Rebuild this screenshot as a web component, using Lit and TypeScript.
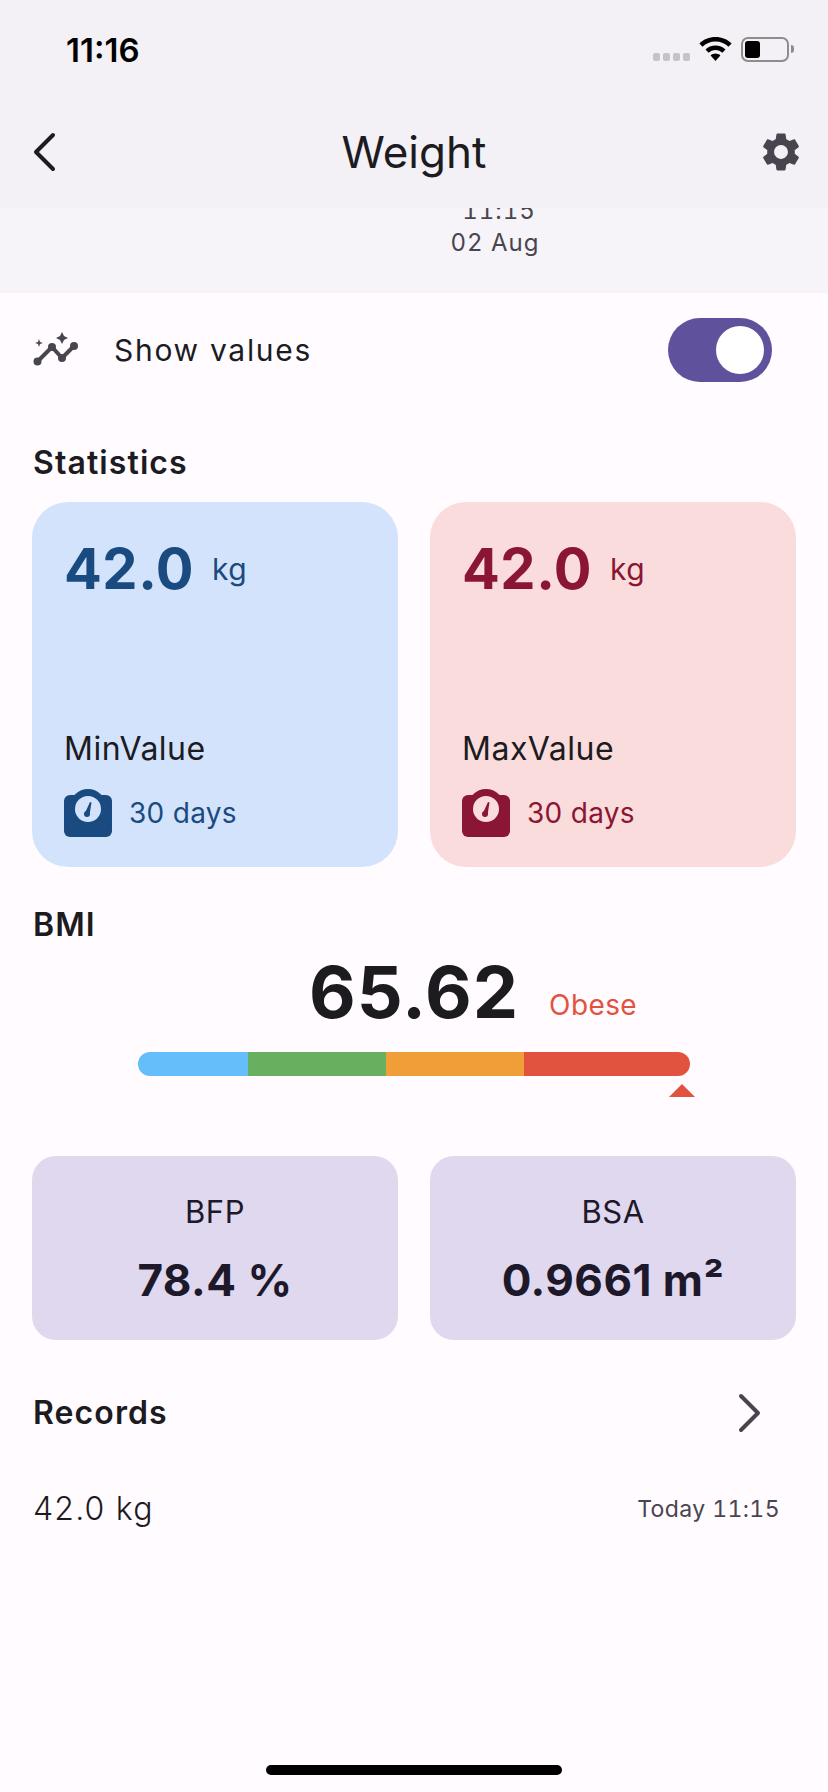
import { LitElement, css, html, svg } from 'lit'
import { customElement } from 'lit/decorators.js'

const scaleIcon = (bg: string) => html`
  <svg class="scale" viewBox="0 0 48 48">
    <circle cx="24" cy="18" r="18" fill="currentColor"></circle>
    <rect x="0" y="6" width="48" height="42" rx="6" fill="currentColor"></rect>
    <circle cx="24" cy="20" r="13" fill=${bg}></circle>
    <path d="M20.500 25 L26 13 L27.500 13.600 L25.500 26 Z" fill="currentColor"></path>
    <circle cx="23" cy="25" r="3" fill="currentColor"></circle>
  </svg>
`

const stats = [
  { cls: 'min', value: '42.0', label: 'MinValue', bg: '#d4e3fc' },
  { cls: 'max', value: '42.0', label: 'MaxValue', bg: '#fadcdc' },
]

@customElement('app-root')
export class AppRoot extends LitElement {
  render() {
    return html`
      <div class="page">
        <div class="status">
          <span class="time">11:16</span>
          <div class="status-icons">
            <div class="signal"><i></i><i></i><i></i><i></i></div>
            <svg class="wifi" viewBox="0 0 33 24">
              ${svg`<path d="M16.5 0C10.2 0 4.6 2.4.4 6.4l3.1 3.3C6.9 6.5 11.4 4.5 16.5 4.5s9.6 2 13 5.2l3.1-3.3C28.4 2.4 22.8 0 16.5 0z"></path>
              <path d="M16.5 8.4c-3.9 0-7.4 1.5-10 4l3.1 3.3c1.8-1.7 4.200-2.800 6.900-2.800s5.100 1.100 6.900 2.800l3.100-3.300c-2.600-2.500-6.100-4-10-4z"></path>
              <path d="M16.500 16.600c-1.900 0-3.600.700-4.900 1.900l4.900 5.500 4.900-5.500c-1.300-1.200-3-1.900-4.900-1.900z"></path>`}
            </svg>
            <div class="battery"><div class="battery-fill"></div></div>
            <div class="battery-nub"></div>
          </div>
        </div>

        <header class="bar">
          <svg class="back" viewBox="0 0 24 40">
            <path d="M21 3 L4 20 L21 37" fill="none" stroke="#1c1b1f" stroke-width="4" stroke-linecap="round" stroke-linejoin="round"></path>
          </svg>
          <h1>Weight</h1>
          <svg class="gear" viewBox="0 0 24 24">
            <path fill="#49454f" d="M19.140 12.940c.04-.3.06-.61.06-.94 0-.32-.02-.64-.07-.94l2.030-1.580c.18-.14.23-.41.12-.61l-1.920-3.320c-.12-.22-.37-.29-.59-.22l-2.390.96c-.5-.38-1.030-.7-1.620-.94l-.36-2.540c-.04-.24-.24-.41-.48-.41h-3.840c-.24 0-.43.17-.47.41l-.36 2.540c-.59.24-1.130.57-1.620.94l-2.390-.96c-.22-.08-.47 0-.59.22L2.740 8.870c-.12.21-.08.47.12.61l2.030 1.580c-.05.3-.09.63-.09.94s.02.64.07.94l-2.030 1.580c-.18.14-.23.41-.12.61l1.920 3.320c.12.22.37.29.59.22l2.390-.96c.5.38 1.030.7 1.620.94l.36 2.540c.05.24.24.41.48.41h3.840c.24 0 .44-.17.47-.41l.36-2.540c.59-.24 1.130-.56 1.620-.94l2.390.96c.22.08.47 0 .59-.22l1.920-3.320c.12-.22.07-.47-.12-.61l-2.010-1.580zM12 15.600c-1.980 0-3.600-1.620-3.600-3.600s1.620-3.600 3.600-3.600 3.600 1.620 3.600 3.600-1.620 3.600-3.600 3.600z"></path>
          </svg>
        </header>

        <div class="chart-strip">
          <div class="stamp"><span>11:15</span><span>02 Aug</span></div>
        </div>

        <div class="toggle-row">
          <svg class="spark" viewBox="0 0 48 36">
            <path d="M4 30 L19 15 L29 26 L41 14" fill="none" stroke="#49454f" stroke-width="4" stroke-linejoin="round"></path>
            <circle cx="4.500" cy="29.500" r="4" fill="#49454f"></circle>
            <circle cx="19" cy="15" r="4" fill="#49454f"></circle>
            <circle cx="29" cy="26" r="4" fill="#49454f"></circle>
            <circle cx="41" cy="14" r="4" fill="#49454f"></circle>
            <path d="M29 0 L31 4 L35 6 L31 8 L29 12 L27 8 L23 6 L27 4 Z" fill="#49454f"></path>
            <path d="M6 7 L7 10 L10 11 L7 12 L6 15 L5 12 L2 11 L5 10 Z" fill="#49454f"></path>
          </svg>
          <span class="toggle-label">Show values</span>
          <div class="switch"><div class="knob"></div></div>
        </div>

        <h2 class="stat-title">Statistics</h2>
        <div class="two-up">
          ${stats.map(
            (s) => html`
              <div class="stat ${s.cls}">
                <div class="stat-value"><b>${s.value}</b><span>kg</span></div>
                <div class="stat-label">${s.label}</div>
                <div class="stat-foot">${scaleIcon(s.bg)}<span>30 days</span></div>
              </div>
            `
          )}
        </div>

        <h2 class="bmi-title">BMI</h2>
        <div class="bmi-row">
          <span class="bmi-value">65.62</span>
          <span class="bmi-tag">Obese</span>
        </div>
        <div class="gauge">
          <i class="g1"></i><i class="g2"></i><i class="g3"></i><i class="g4"></i>
          <div class="marker"></div>
        </div>

        <div class="two-up small">
          <div class="metric"><span>BFP</span><b>78.4 %</b></div>
          <div class="metric"><span>BSA</span><b>0.9661 m²</b></div>
        </div>

        <div class="records-head">
          <h2>Records</h2>
          <svg class="chev" viewBox="0 0 24 40">
            <path d="M3 3 L20 20 L3 37" fill="none" stroke="#49454f" stroke-width="4" stroke-linecap="round" stroke-linejoin="round"></path>
          </svg>
        </div>
        <div class="record">
          <span class="record-val">42.0 kg</span>
          <span class="record-time">Today 11:15</span>
        </div>

        <div class="grow"></div>
        <div class="home"></div>
      </div>
    `
  }

  static styles = css`
    :host {
      display: block;
      font-family: Inter, 'Noto Sans', sans-serif;
      color: #1c1b1f;
    }
    .page {
      height: 1792px;
      background: #fffbff;
      display: flex;
      flex-direction: column;
      overflow: hidden;
    }
    .status {
      height: 88px;
      background: #f3f0f6;
      display: flex;
      justify-content: space-between;
      align-items: flex-start;
      padding: 0 34px 0 66px;
      flex: none;
    }
    .time {
      font-size: 33px;
      font-weight: 600;
      line-height: 32px;
      margin-top: 34px;
      color: #000;
    }
    .status-icons {
      display: flex;
      align-items: flex-start;
      margin-top: 37px;
    }
    .signal {
      display: flex;
      gap: 3px;
      margin-top: 16px;
      margin-right: 9px;
    }
    .signal i {
      width: 7px;
      height: 8px;
      border-radius: 2px;
      background: #c5c3c8;
    }
    .wifi {
      width: 33px;
      height: 24px;
      margin-right: 9px;
      fill: #000;
    }
    .battery {
      width: 48px;
      height: 25px;
      box-sizing: border-box;
      border: 2px solid #8e8c91;
      border-radius: 7px;
      padding: 2px;
    }
    .battery-fill {
      width: 15px;
      height: 100%;
      background: #000;
      border-radius: 3px;
    }
    .battery-nub {
      width: 3px;
      height: 8px;
      margin: 8px 0 0 2px;
      background: #8e8c91;
      border-radius: 0 3px 3px 0;
    }
    .bar {
      height: 120px;
      background: #f3f0f6;
      display: grid;
      grid-template-columns: 1fr auto 1fr;
      align-items: center;
      padding: 8px 24px 0;
      box-sizing: border-box;
      flex: none;
    }
    .bar h1 {
      margin: 0;
      font-size: 44px;
      font-weight: 400;
      line-height: 56px;
    }
    .back,
    .chev {
      width: 24px;
      height: 40px;
    }
    .back {
      margin-left: 8px;
    }
    .gear {
      width: 46px;
      height: 46px;
      justify-self: end;
    }
    .chart-strip {
      height: 85px;
      background: #f6f4f9;
      overflow: hidden;
      display: flex;
      justify-content: center;
      align-items: flex-end;
      padding-left: 2px;
      flex: none;
    }
    .stamp {
      display: flex;
      flex-direction: column;
      align-items: center;
      transform: translateX(80px);
      font-size: 24px;
      line-height: 32px;
      letter-spacing: 1px;
      color: #49454f;
      padding-bottom: 34px;
      font-variant-numeric: tabular-nums;
    }
    .stamp span:first-child {
      margin-left: 8px;
    }
    .toggle-row {
      display: flex;
      align-items: center;
      height: 64px;
      margin-top: 25px;
      padding: 0 56px 0 33px;
      flex: none;
    }
    .spark {
      width: 48px;
      height: 36px;
    }
    .toggle-label {
      margin-left: 33px;
      font-size: 30px;
      letter-spacing: 1.7px;
      flex: 1;
    }
    .switch {
      width: 104px;
      height: 64px;
      border-radius: 32px;
      background: #60519d;
      display: flex;
      align-items: center;
      justify-content: flex-end;
      padding-right: 8px;
      box-sizing: border-box;
    }
    .knob {
      width: 48px;
      height: 48px;
      border-radius: 50%;
      background: #fff;
    }
    h2 {
      margin: 0;
      font-size: 32px;
      font-weight: 600;
      line-height: 40px;
      letter-spacing: 1.1px;
    }
    .stat-title {
      margin: 61px 0 19px 33px;
    }
    .two-up {
      display: grid;
      grid-template-columns: 366px 366px;
      gap: 32px;
      padding: 0 32px;
      flex: none;
    }
    .stat {
      height: 365px;
      border-radius: 36px;
      padding: 30px 32px;
      box-sizing: border-box;
      display: flex;
      flex-direction: column;
    }
    .stat.min {
      background: #d4e3fc;
      color: #1a4b80;
    }
    .stat.max {
      background: #fadcdc;
      color: #8a1633;
    }
    .stat-value {
      display: flex;
      align-items: center;
      gap: 18px;
      height: 74px;
      line-height: 74px;
    }
    .stat-value b {
      font-size: 56px;
      font-weight: 700;
      letter-spacing: 0.5px;
    }
    .stat-value span {
      font-size: 30px;
      letter-spacing: 0.5px;
    }
    .stat-label {
      margin-top: auto;
      color: #1c1b1f;
      font-size: 32px;
      line-height: 40px;
      letter-spacing: 0.5px;
    }
    .stat-foot {
      display: flex;
      align-items: center;
      gap: 17px;
      margin-top: 20px;
      font-size: 28px;
      letter-spacing: 0.3px;
    }
    .scale {
      width: 48px;
      height: 48px;
      display: block;
    }
    .bmi-title {
      margin: 38px 0 0 33px;
    }
    .bmi-row {
      display: grid;
      grid-template-columns: 1fr auto 1fr;
      align-items: center;
      column-gap: 30px;
      height: 84px;
      line-height: 84px;
      margin-top: 5px;
      flex: none;
    }
    .bmi-value {
      grid-column: 2;
      font-size: 72px;
      font-weight: 700;
      letter-spacing: 1px;
    }
    .bmi-tag {
      font-size: 28px;
      line-height: 34px;
      margin-top: 25px;
      color: #e2533f;
      letter-spacing: 0.4px;
    }
    .gauge {
      position: relative;
      display: grid;
      grid-template-columns: 110px 138px 138px 166px;
      width: 552px;
      height: 24px;
      margin: 18px 0 0 138px;
      flex: none;
    }
    .gauge i:first-child {
      border-radius: 12px 0 0 12px;
    }
    .g1 {
      background: #64bef9;
    }
    .g2 {
      background: #68af5f;
    }
    .g3 {
      background: #f09e37;
    }
    .g4 {
      background: #e2533f;
      border-radius: 0 12px 12px 0;
    }
    .marker {
      position: absolute;
      right: -5px;
      top: 32px;
      width: 0;
      height: 0;
      border-left: 13px solid transparent;
      border-right: 13px solid transparent;
      border-bottom: 13px solid #e2533f;
    }
    .two-up.small {
      margin-top: 80px;
    }
    .metric {
      height: 184px;
      border-radius: 24px;
      background: #dfd8ee;
      color: #1d192b;
      display: flex;
      flex-direction: column;
      align-items: center;
      padding-top: 38px;
      box-sizing: border-box;
    }
    .metric span {
      font-size: 31px;
      line-height: 36px;
      letter-spacing: 0.5px;
    }
    .metric b {
      font-size: 44px;
      font-weight: 700;
      line-height: 56px;
      margin-top: 22px;
      letter-spacing: 0.5px;
    }
    .records-head {
      display: flex;
      align-items: center;
      justify-content: space-between;
      padding: 0 66px 0 33px;
      margin-top: 53px;
      flex: none;
    }
    .record {
      display: flex;
      align-items: center;
      justify-content: space-between;
      padding: 0 48px 0 33px;
      margin-top: 56px;
      flex: none;
    }
    .record-val {
      font-size: 32px;
      font-weight: 300;
      letter-spacing: 1.2px;
    }
    .record-time {
      font-size: 23px;
      letter-spacing: 0.4px;
      color: #49454f;
      font-variant-numeric: tabular-nums;
    }
    .grow {
      flex: 1;
    }
    .home {
      width: 296px;
      height: 10px;
      border-radius: 5px;
      background: #000;
      margin: 0 auto 17px;
      flex: none;
    }
  `
}

declare global {
  interface HTMLElementTagNameMap {
    'app-root': AppRoot
  }
}
